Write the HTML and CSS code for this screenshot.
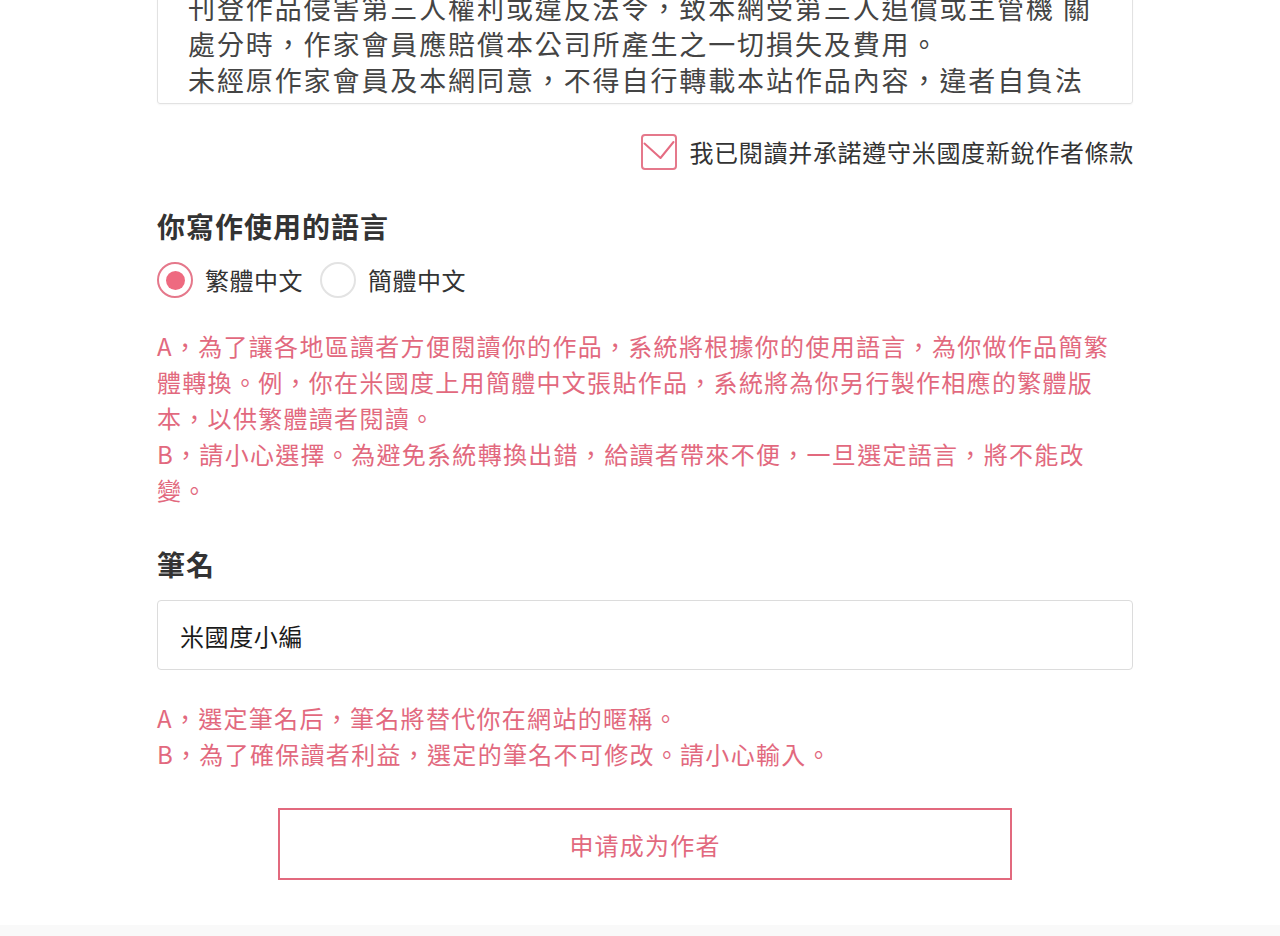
FILE: index.html
```html
<!DOCTYPE html>
<html lang="zh-Hant">
<head>
<meta charset="utf-8">
<title>申请成为作者</title>
<link rel="stylesheet" href="styles.css">
</head>
<body>
<main class="form">
  <div class="terms">
    <div class="terms-line">刊登作品侵害第三人權利或違反法令，致本網受第三人追償或主管機 關</div>
    <div class="terms-line">處分時，作家會員應賠償本公司所產生之一切損失及費用。</div>
    <div class="terms-line">未經原作家會員及本網同意，不得自行轉載本站作品內容，違者自負法</div>
  </div>

  <label class="agree">
    <span class="checkbox">
      <svg width="36" height="36" viewBox="0 0 36 36"><polyline points="3.5,9.5 19.5,24 32.5,8" fill="none" stroke="#e56c82" stroke-width="2" stroke-linecap="round" stroke-linejoin="round"/></svg>
    </span>
    <span class="agree-text">我已閱讀并承諾遵守米國度新銳作者條款</span>
  </label>

  <h2 class="section-title title-lang">你寫作使用的語言</h2>
  <div class="radios">
    <label class="radio-item"><span class="radio checked"></span><span class="radio-text">繁體中文</span></label>
    <label class="radio-item"><span class="radio"></span><span class="radio-text">簡體中文</span></label>
  </div>

  <p class="hint hint-lang">A，為了讓各地區讀者方便閱讀你的作品，系統將根據你的使用語言，為你做作品簡繁體轉換。例，你在米國度上用簡體中文張貼作品，系統將為你另行製作相應的繁體版本，以供繁體讀者閱讀。<br>B，請小心選擇。為避免系統轉換出錯，給讀者帶來不便，一旦選定語言，將不能改變。</p>

  <h2 class="section-title title-name">筆名</h2>
  <div class="input">米國度小編</div>

  <p class="hint hint-name">A，選定筆名后，筆名將替代你在網站的暱稱。<br>B，為了確保讀者利益，選定的筆名不可修改。請小心輸入。</p>

  <div class="actions">
    <button class="submit" type="button">申请成为作者</button>
  </div>
</main>
<footer class="footer"></footer>
</body>
</html>
```

FILE: styles.css
```css
* { box-sizing: border-box; }

html, body {
  margin: 0;
  padding: 0;
  background: #ffffff;
}

body {
  font-family: "Noto Sans CJK SC", "Noto Sans CJK TC", "Noto Sans", sans-serif;
  color: #333333;
  overflow: hidden;
  text-spacing-trim: space-all;
}

.form {
  width: 976px;
  margin-left: calc(50% - 483px);
}

.terms {
  margin-top: -40px;
  border: 1px solid #e2e2e2;
  border-radius: 3px;
  padding: 29px 30px 5px 30px;
  box-shadow: 0 1px 2px rgba(0, 0, 0, 0.04);
}

.terms-line {
  font-size: 27px;
  letter-spacing: 1.9px;
  line-height: 36px;
  height: 36px;
  color: #444444;
  white-space: nowrap;
}

.agree {
  margin-top: 30px;
  height: 36px;
  display: flex;
  justify-content: flex-end;
  align-items: center;
  gap: 12px;
}

.checkbox {
  width: 36px;
  height: 36px;
  border: 2px solid #e5788b;
  border-radius: 4px;
  position: relative;
  display: block;
}

.checkbox svg {
  position: absolute;
  left: -2px;
  top: -2px;
}

.agree-text {
  font-size: 24px;
  letter-spacing: 0.7px;
  line-height: 36px;
  color: #333333;
  margin-right: -1px;
}

.section-title {
  margin: 0;
  font-size: 28px;
  font-weight: 700;
  line-height: 40px;
  height: 40px;
  color: #333333;
  letter-spacing: 1px;
}

.title-lang { margin-top: 36px; }

.radios {
  margin-top: 16px;
  height: 36px;
  display: flex;
  align-items: center;
  gap: 17px;
}

.radio-item {
  display: flex;
  align-items: center;
  gap: 12px;
}

.radio {
  width: 36px;
  height: 36px;
  border-radius: 50%;
  border: 2px solid #e3e3e3;
  display: flex;
  align-items: center;
  justify-content: center;
}

.radio.checked {
  border-color: #e5788b;
}

.radio.checked::after {
  content: "";
  width: 19px;
  height: 19px;
  border-radius: 50%;
  background: #ee6a80;
}

.radio-text {
  font-size: 24px;
  letter-spacing: 0.5px;
  line-height: 36px;
  color: #333333;
}

.hint {
  margin: 0;
  width: 970px;
  font-size: 24px;
  letter-spacing: 1.3px;
  line-height: 36px;
  color: #e2697e;
}

.hint-lang { margin-top: 30px; }

.title-name { margin-top: 36px; }

.input {
  margin-top: 16px;
  height: 70px;
  border: 1px solid #dcdcdc;
  border-radius: 4px;
  padding-left: 22px;
  display: flex;
  align-items: center;
  font-size: 24px;
  letter-spacing: 0.6px;
  color: #1a1a1a;
}

.hint-name { margin-top: 30px; }

.actions {
  margin-top: 36px;
  display: flex;
  justify-content: center;
  padding-bottom: 45px;
}

.submit {
  width: 734px;
  height: 72px;
  border: 2px solid #e2697e;
  border-radius: 0;
  background: #ffffff;
  color: #e2697e;
  font-family: "Noto Sans CJK SC", "Noto Sans CJK TC", sans-serif;
  font-size: 24px;
  letter-spacing: 1.2px;
  padding: 0;
}

.footer {
  height: 200px;
  background: #f9f9f9;
}
```
